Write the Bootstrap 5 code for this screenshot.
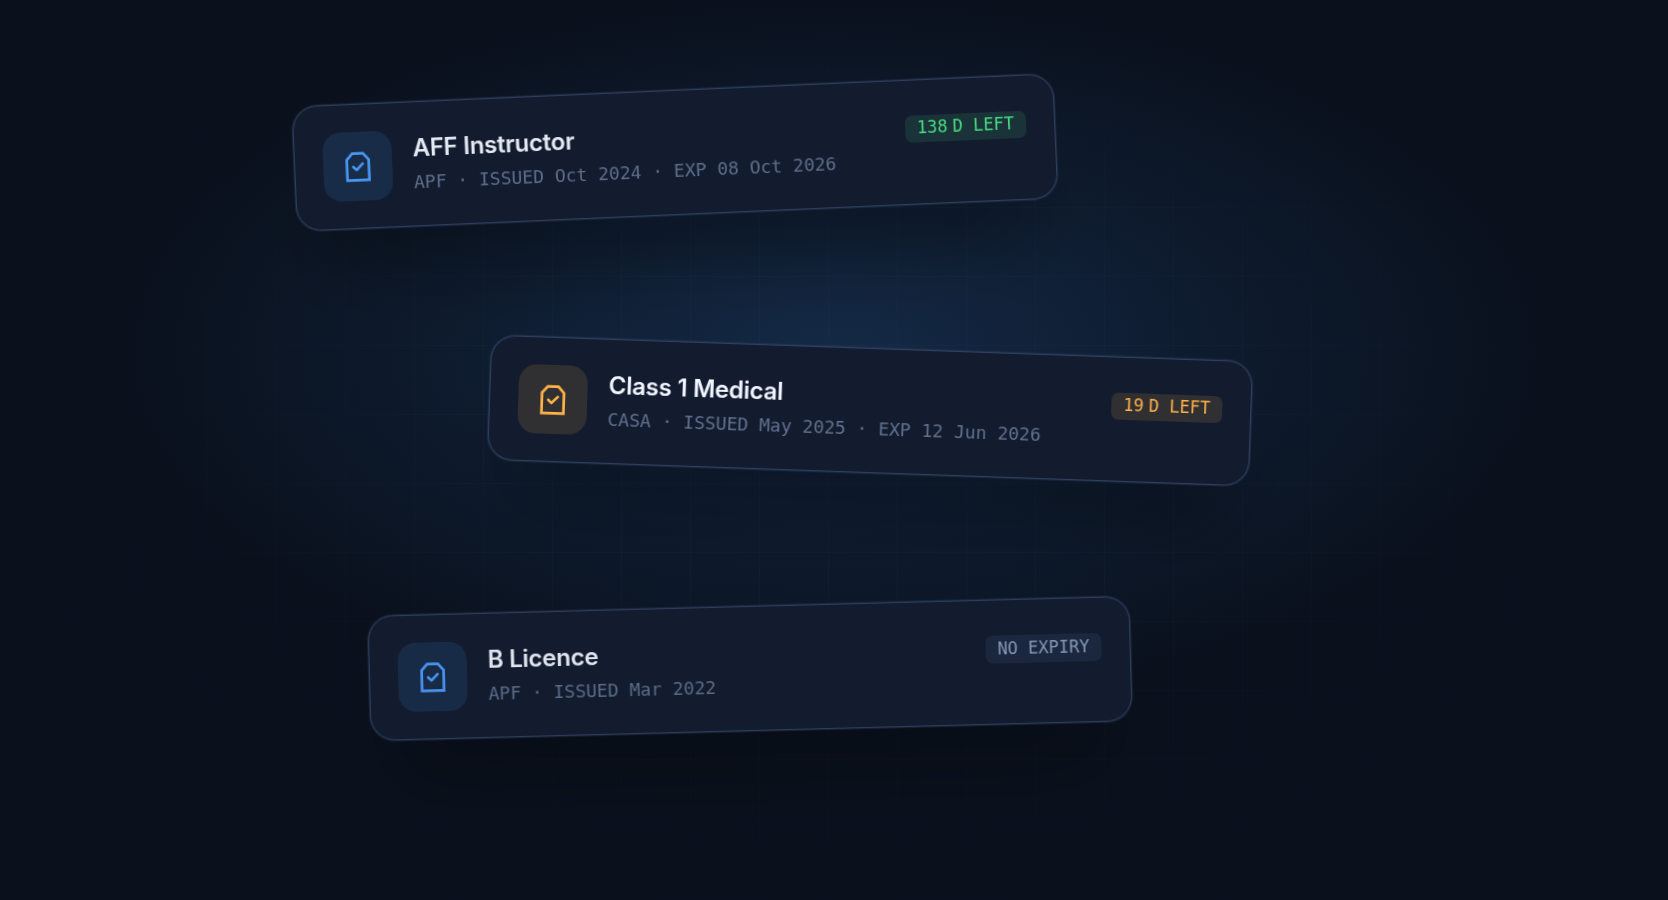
<!DOCTYPE html>
<html lang="en">
<head>
<meta charset="utf-8">
<meta name="viewport" content="width=device-width, initial-scale=1">
<title>Licences</title>
<link href="https://cdn.jsdelivr.net/npm/bootstrap@5.3.0/dist/css/bootstrap.min.css" rel="stylesheet">
<style>
  body {
    background: #0a111d;
    font-family: Inter, "Liberation Sans", sans-serif;
  }
  .stage {
    min-height: 100vh;
    padding-top: 90px;
    padding-bottom: 90px;
    gap: 133px;
    overflow: hidden;
    isolation: isolate;
    background:
      radial-gradient(ellipse 60% 55% at 50% 39%, rgba(50, 114, 190, .25), rgba(40, 96, 165, .13) 38%, rgba(30, 84, 140, 0) 71%),
      #0a111d;
  }
  /* faint blueprint grid that fades out towards the edges */
  .stage::before {
    content: "";
    position: absolute;
    inset: 0;
    z-index: -1;
    background-image:
      linear-gradient(to right, rgba(80, 140, 190, .04) 1px, transparent 1px),
      linear-gradient(to bottom, rgba(80, 140, 190, .04) 1px, transparent 1px);
    background-size: 69px 69px;
    -webkit-mask-image: radial-gradient(ellipse 60% 70% at 50% 50%, #000 30%, transparent 85%);
    mask-image: radial-gradient(ellipse 60% 70% at 50% 50%, #000 30%, transparent 85%);
  }
  .credential {
    width: 762px;
    max-width: 70%;
    padding: 27px 28px;
    gap: 21px;
    border: 1px solid #2e4060;
    border-radius: 25px;
    background: #131b2e;
    box-shadow: 0 0 1px 1px rgba(46, 64, 96, .5), 0 60px 84px -28px rgba(0, 0, 0, .42);
    will-change: transform;
  }
  .tilt-a { margin-left: 17.65%; transform: rotate(-2.5deg); opacity: .95; }
  .tilt-b { margin-left: 29.32%; transform: rotate(2deg); z-index: 1; }
  .tilt-c { margin-left: 22.12%; transform: rotate(-1.5deg); opacity: .93; }
  .tile {
    width: 69px;
    height: 69px;
    border-radius: 18px;
    background: #182c48;
    color: #4b9cff;
  }
  .tile-warn { background: #302f31; color: #ffb348; }
  .title {
    font-size: 24px;
    line-height: 32px;
    font-weight: 600;
    letter-spacing: -0.01em;
    color: #f0f5ff;
  }
  .meta, .pill {
    font-family: "DejaVu Sans Mono", monospace;
  }
  .meta {
    font-size: 18px;
    line-height: 28px;
    color: #60728f;
  }
  .pill {
    font-size: 17px;
    line-height: 20px;
    padding: 3px 12px 5px;
    border-radius: 7px;
    background: #1a2740;
    color: #91a1bf;
  }
  .pill-days { gap: 5px; padding-top: 2px; }
  .pill-ok { background: #1a3338; color: #4ae486; }
  .pill-warn { background: #302f31; color: #ffb348; }
</style>
</head>
<body>
<main class="stage position-relative d-flex flex-column align-items-start">

  <article class="credential tilt-a d-flex align-items-center">
    <div class="tile d-flex align-items-center justify-content-center flex-shrink-0">
      <svg width="34" height="34" viewBox="0 0 24 24" fill="none" stroke="currentColor" stroke-width="1.9" aria-hidden="true"><path d="M4 7L8 2.5h7.5l4 4.5v14.5H4z"/><path d="M8.5 12l2.3 2.2 4.4-4.4" stroke-linecap="round" stroke-linejoin="round"/></svg>
    </div>
    <div class="d-grid gap-1 flex-grow-1">
      <h2 class="title mb-0">AFF Instructor</h2>
      <p class="meta mb-0">APF · ISSUED Oct 2024 · EXP 08 Oct 2026</p>
    </div>
    <div class="pill pill-days pill-ok d-flex align-self-start mt-2 text-nowrap"><span>138</span><span>D LEFT</span></div>
  </article>

  <article class="credential tilt-b d-flex align-items-center">
    <div class="tile tile-warn d-flex align-items-center justify-content-center flex-shrink-0">
      <svg width="34" height="34" viewBox="0 0 24 24" fill="none" stroke="currentColor" stroke-width="1.9" aria-hidden="true"><path d="M4 7L8 2.5h7.5l4 4.5v14.5H4z"/><path d="M8.5 12l2.3 2.2 4.4-4.4" stroke-linecap="round" stroke-linejoin="round"/></svg>
    </div>
    <div class="d-grid gap-1 flex-grow-1">
      <h2 class="title mb-0">Class 1 Medical</h2>
      <p class="meta mb-0">CASA · ISSUED May 2025 · EXP 12 Jun 2026</p>
    </div>
    <div class="pill pill-days pill-warn d-flex align-self-start mt-2 text-nowrap"><span>19</span><span>D LEFT</span></div>
  </article>

  <article class="credential tilt-c d-flex align-items-center">
    <div class="tile d-flex align-items-center justify-content-center flex-shrink-0">
      <svg width="34" height="34" viewBox="0 0 24 24" fill="none" stroke="currentColor" stroke-width="1.9" aria-hidden="true"><path d="M4 7L8 2.5h7.5l4 4.5v14.5H4z"/><path d="M8.5 12l2.3 2.2 4.4-4.4" stroke-linecap="round" stroke-linejoin="round"/></svg>
    </div>
    <div class="d-grid gap-1 flex-grow-1">
      <h2 class="title mb-0">B Licence</h2>
      <p class="meta mb-0">APF · ISSUED Mar 2022</p>
    </div>
    <div class="pill align-self-start mt-2 text-nowrap">NO EXPIRY</div>
  </article>

</main>
<script src="https://cdn.jsdelivr.net/npm/bootstrap@5.3.0/dist/js/bootstrap.bundle.min.js"></script>
</body>
</html>
